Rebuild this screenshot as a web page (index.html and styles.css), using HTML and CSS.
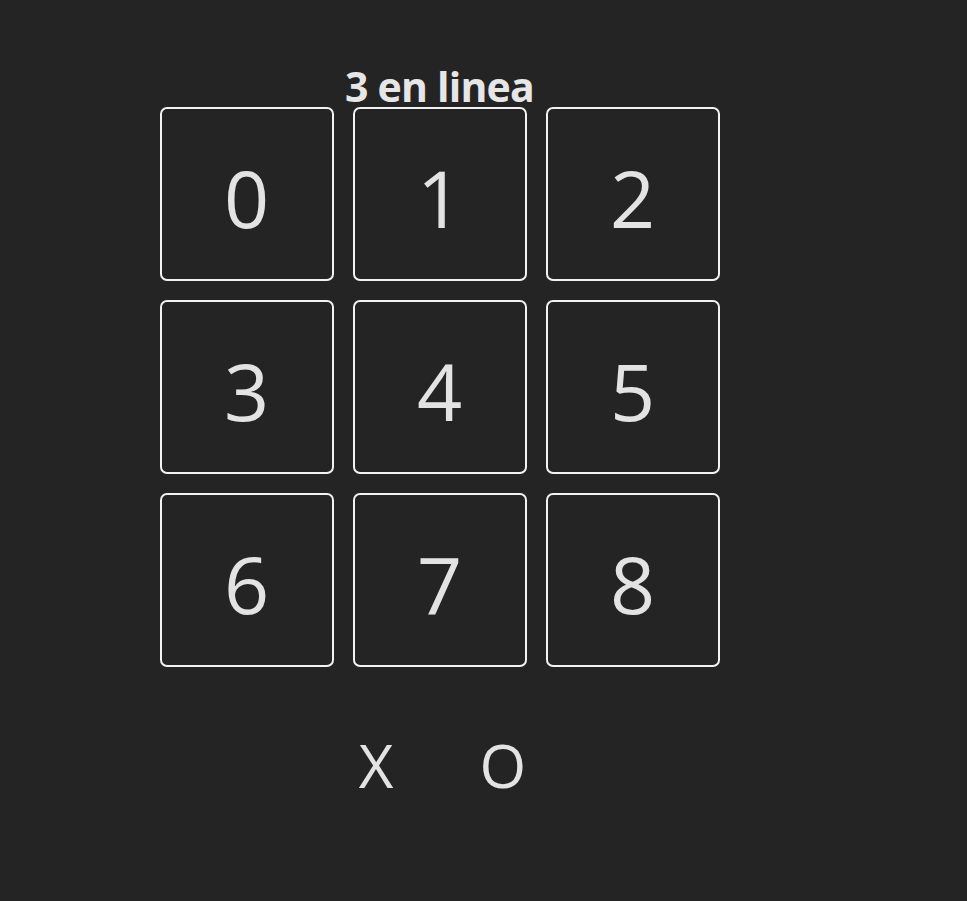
FILE: index.html
```html
<!DOCTYPE html>
<html lang="es">
<head>
<meta charset="utf-8">
<title>3 en linea</title>
<link rel="stylesheet" href="styles.css">
</head>
<body>
<main class="game">
  <h1 class="title">3 en linea</h1>
  <div class="board">
    <button class="cell">0</button>
    <button class="cell">1</button>
    <button class="cell">2</button>
    <button class="cell">3</button>
    <button class="cell">4</button>
    <button class="cell">5</button>
    <button class="cell">6</button>
    <button class="cell">7</button>
    <button class="cell">8</button>
  </div>
  <div class="players">
    <span class="player">X</span>
    <span class="player">O</span>
  </div>
</main>
</body>
</html>
```

FILE: styles.css
```css
html, body {
  margin: 0;
  padding: 0;
  background: #242424;
  color: #e3e3e3;
  font-family: "Open Sans", "Noto Sans", sans-serif;
}

.game {
  width: 559px;
  margin-left: 160px;
  padding-top: 65px;
  display: flex;
  flex-direction: column;
  align-items: center;
}

.title {
  margin: 0;
  font-size: 41px;
  font-weight: 700;
  letter-spacing: -0.8px;
  line-height: 42px;
  color: #e6e6e6;
}

.board {
  display: grid;
  grid-template-columns: repeat(3, 174px);
  grid-auto-rows: 174px;
  gap: 19px;
}

.cell {
  box-sizing: border-box;
  margin: 0;
  padding: 6px 0 0;
  background: #242424;
  border: 2px solid #f2f2f2;
  border-radius: 7px;
  color: #e3e3e3;
  font-family: "Open Sans", "Noto Sans", sans-serif;
  font-size: 79px;
  line-height: 1;
}

.players {
  display: flex;
  gap: 86px;
  margin-top: 68px;
  margin-left: 6px;
  font-size: 60px;
  line-height: 1;
}
```
